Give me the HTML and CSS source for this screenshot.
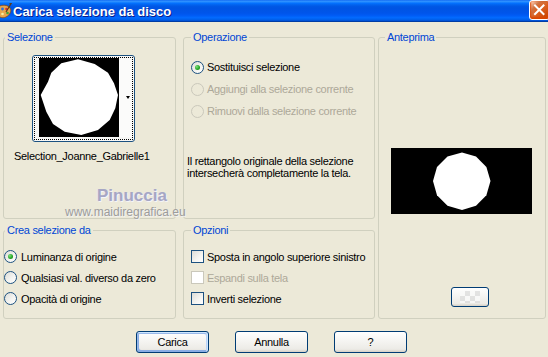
FILE: index.html
```html
<!DOCTYPE html>
<html lang="it">
<head>
<meta charset="utf-8">
<title>Carica selezione da disco</title>
<link rel="stylesheet" href="styles.css">
</head>
<body>
<div class="window">
  <div class="titlebar">
    <div class="title-left">
      <svg class="app-icon" width="12" height="16" viewBox="0 0 12 16">
        <path d="M-2 4 C2 1 8 2 10 5 C12 8 10 12 6 14 C2 16 -2 14 -2 10 Z" fill="#E8A54C" stroke="#8A4B12" stroke-width="0.8"/>
        <circle cx="2.5" cy="6" r="1.4" fill="#2E6FD8"/>
        <circle cx="6.5" cy="6" r="1.3" fill="#D62F2F"/>
        <circle cx="7.5" cy="10" r="1.3" fill="#3BA53B"/>
        <circle cx="2.5" cy="11" r="1.3" fill="#F6F0A0"/>
        <path d="M9.5 1 L11.5 0 L6 9" stroke="#5A3A1A" stroke-width="1.2" fill="none"/>
      </svg>
      <span class="title">Carica selezione da disco</span>
    </div>
    <button class="close" aria-label="Chiudi">
      <svg width="19" height="18" viewBox="0 0 19 18"><path d="M5 4.5 L13.5 13 M13.5 4.5 L5 13" stroke="#fff" stroke-width="2" stroke-linecap="square"/></svg>
    </button>
  </div>

  <div class="content">
    <div class="groups">
      <div class="col col-left">
        <div class="group g-sel">
          <span class="legend legend-left">Selezione</span>
          <div class="thumb">
            <div class="thumb-focus">
              <svg class="thumb-img" width="80" height="79" viewBox="0 0 80 79">
                <rect width="80" height="79" fill="#000"/>
                <polygon fill="#fff" points="22.3,5.3 39,1.3 55.7,6 69,14.7 75,25.3 79,37 76.3,50.3 70.7,62 59,72 42.3,77 25.7,73.7 14,66 7.3,53.7 1.7,37 9,23.7 12.3,14.7"/>
              </svg>
              <div class="thumb-strip"><span class="thumb-arrow"></span></div>
            </div>
          </div>
          <div class="caption">Selection_Joanne_Gabrielle1</div>
        </div>
        <div class="group g-crea">
          <span class="legend legend-left">Crea selezione da</span>
          <div class="opt-list opt-crea">
            <label class="opt"><span class="radio checked"></span>Luminanza di origine</label>
            <label class="opt"><span class="radio"></span>Qualsiasi val. diverso da zero</label>
            <label class="opt"><span class="radio"></span>Opacità di origine</label>
          </div>
        </div>
      </div>

      <div class="col col-mid">
        <div class="group g-op">
          <span class="legend legend-mid">Operazione</span>
          <div class="opt-list opt-op">
            <label class="opt opt-tall"><span class="radio checked"></span>Sostituisci selezione</label>
            <label class="opt opt-tall disabled"><span class="radio off"></span>Aggiungi alla selezione corrente</label>
            <label class="opt opt-tall disabled"><span class="radio off"></span>Rimuovi dalla selezione corrente</label>
          </div>
          <p class="note">Il rettangolo originale della selezione intersecherà completamente la tela.</p>
        </div>
        <div class="group g-opz">
          <span class="legend legend-mid">Opzioni</span>
          <div class="opt-list opt-opz">
            <label class="opt"><span class="check"></span>Sposta in angolo superiore sinistro</label>
            <label class="opt disabled"><span class="check off"></span>Espandi sulla tela</label>
            <label class="opt"><span class="check"></span>Inverti selezione</label>
          </div>
        </div>
      </div>

      <div class="group g-ant">
        <span class="legend legend-ant">Anteprima</span>
        <svg class="preview" width="141" height="66" viewBox="0 0 141 66">
          <rect width="141" height="66" fill="#000"/>
          <polygon fill="#fff" points="99.5,33 95.4,47.3 85,57.8 71,62 56.5,57.8 46,47.3 42,33 46,19 56.5,8.5 71,4.5 85,8.5 95.4,19"/>
        </svg>
        <button class="xpbtn bg-btn" aria-label="Sfondo"><span class="checker"></span></button>
      </div>
    </div>

    <div class="buttons">
      <button class="xpbtn default">Carica</button>
      <button class="xpbtn">Annulla</button>
      <button class="xpbtn">?</button>
    </div>
  </div>

  <div class="watermark">
    <div class="wm-name">Pinuccia</div>
    <div class="wm-url">www.maidiregrafica.eu</div>
  </div>
</div>
</body>
</html>
```

FILE: styles.css
```css
* { box-sizing: border-box; }

html, body {
  margin: 0;
  padding: 0;
}

body {
  background: #ECE9D8;
  font-family: "Liberation Sans", Arial, sans-serif;
  font-size: 11px;
  letter-spacing: -0.3px;
  color: #000;
}

.window {
  position: relative;
  width: 548px;
  height: 357px;
  overflow: hidden;
  background: #ECE9D8;
}

/* ---------- title bar ---------- */
.titlebar {
  height: 22px;
  display: flex;
  align-items: center;
  justify-content: space-between;
  background: linear-gradient(180deg, #0058ee 0%, #3593ff 4%, #288eff 8%, #127dff 12%, #036ffc 16%, #0262ee 22%, #0057e5 30%, #0054e3 38%, #0055eb 60%, #005bf5 70%, #026afe 80%, #0062ef 88%, #0052d6 94%, #0040ab 97%, #003092 100%);
}

.title-left {
  display: flex;
  align-items: center;
}

.app-icon {
  display: block;
  margin-right: 1px;
}

.title {
  color: #fff;
  font-family: "Liberation Sans", Arial, sans-serif;
  font-weight: bold;
  font-size: 13px;
  letter-spacing: 0;
  text-shadow: 1px 1px 0 #0A1E8A;
}

.close {
  align-self: flex-start;
  width: 21px;
  height: 20px;
  margin-right: -2px;
  padding: 0;
  border: 1px solid #fff;
  border-radius: 3px;
  background: radial-gradient(circle at 90% 90%, #cc4600 0%, #dc6527 55%, #cd7546 70%, #ffccb2 90%, #fff 100%);
  box-shadow: inset 0 -1px 2px 1px #da4600;
  display: flex;
  align-items: center;
  justify-content: center;
}

.close svg { display: block; }

/* ---------- content ---------- */
.content {
  padding: 15px 0 0 3px;
}

.groups {
  display: flex;
  align-items: flex-start;
}

.col {
  display: flex;
  flex-direction: column;
  gap: 11px;
}

.col-left { width: 173px; }
.col-mid { width: 192px; margin-left: 7px; }

.group {
  position: relative;
  border: 1px solid #D0D0BF;
  border-radius: 3px;
}

.g-sel, .g-op { height: 182px; }
.g-crea, .g-opz { height: 89px; }

.g-ant {
  width: 168px;
  height: 282px;
  margin-left: 3px;
}

.legend {
  position: absolute;
  top: -7px;
  padding: 0 2px;
  line-height: 13px;
  background: #ECE9D8;
  color: #0046D5;
  white-space: nowrap;
}

.legend-left { left: 1px; }
.legend-mid { left: 7px; }
.legend-ant { left: 6px; }

/* ---------- selection thumbnail ---------- */
.thumb {
  width: 103px;
  height: 87px;
  margin: 17px 0 0 28px;
  padding: 1px;
  border: 1px solid #1C5180;
  border-radius: 3px;
  background: #F7F7F5;
}

.thumb-focus {
  height: 83px;
  border: 1px dotted #000;
  padding: 0 0 0 4px;
  display: flex;
  align-items: flex-start;
}

.thumb-img { display: block; }

.thumb-strip {
  position: relative;
  flex: 1;
  height: 79px;
  background: #FBFBFA;
}

.thumb-arrow {
  position: absolute;
  left: 7px;
  top: 38px;
  width: 0;
  height: 0;
  border-left: 2.5px solid transparent;
  border-right: 2.5px solid transparent;
  border-top: 3px solid #000;
}

.caption {
  margin: 8px 0 0 10px;
  line-height: 13px;
  white-space: nowrap;
}

/* ---------- options ---------- */
.opt-list {
  display: flex;
  flex-direction: column;
}

.opt {
  display: flex;
  align-items: center;
  height: 21px;
  white-space: nowrap;
}

.opt-tall { height: 22px; }

.opt.disabled { color: #ACA899; }

.opt-op { padding: 18px 0 0 7px; }
.opt-crea { padding: 15px 0 0 0; }
.opt-opz { padding: 15px 0 0 7px; }

.radio {
  position: relative;
  flex: none;
  width: 13px;
  height: 13px;
  margin-right: 4px;
  border: 1px solid #1C5180;
  border-radius: 50%;
  background: linear-gradient(135deg, #DCDCD7 0%, #F5F5F2 60%, #FFFFFF 100%);
}

.opt-op .radio { margin-right: 3px; }

.radio.checked::after {
  content: "";
  position: absolute;
  left: 3px;
  top: 3px;
  width: 5px;
  height: 5px;
  border-radius: 50%;
  background: radial-gradient(circle at 35% 35%, #7BE07B 0%, #21A121 60%, #1B8A1B 100%);
}

.radio.off {
  border-color: #CAC8BB;
  background: #ECE9D8;
}

.check {
  flex: none;
  width: 13px;
  height: 13px;
  margin-right: 3px;
  border: 1px solid #1C5180;
  background: linear-gradient(135deg, #DCDCD7 0%, #F5F5F2 60%, #FFFFFF 100%);
}

.check.off {
  border-color: #CAC8BB;
  background: #FFFFFF;
}

.note {
  margin: 33px 0 0 3px;
  line-height: 12px;
}

/* ---------- preview ---------- */
.preview {
  display: block;
  margin: 110px 0 0 12px;
}

/* ---------- buttons ---------- */
.xpbtn {
  font-family: "Liberation Sans", Arial, sans-serif;
  font-size: 11px;
  letter-spacing: -0.3px;
  color: #000;
  padding: 0;
  border: 1px solid #003C74;
  border-radius: 3px;
  background: linear-gradient(180deg, #FFFFFF 0%, #ECEBE6 86%, #D6D0C5 100%);
}

.xpbtn.default {
  box-shadow: inset -1px 1px #CEE7FF, inset 1px 2px #98B8EA, inset -2px 2px #BCD4F6, inset 1px -1px #89ADE4, inset 2px -2px #89ADE4;
}

.bg-btn {
  display: flex;
  align-items: center;
  justify-content: center;
  width: 38px;
  height: 20px;
  margin: 73px 0 0 72px;
}

.checker {
  display: block;
  width: 20px;
  height: 12px;
  background-color: #FAFAFA;
  background-image:
    linear-gradient(45deg, #DEDEDE 25%, transparent 25%, transparent 75%, #DEDEDE 75%),
    linear-gradient(45deg, #DEDEDE 25%, transparent 25%, transparent 75%, #DEDEDE 75%);
  background-size: 10px 10px;
  background-position: 0 0, 5px 5px;
  opacity: 0.8;
}

.buttons {
  display: flex;
  gap: 26px;
  margin: 12px 0 0 133px;
}

.buttons .xpbtn {
  width: 73px;
  height: 22px;
}

/* ---------- watermark ---------- */
.watermark {
  position: absolute;
  left: 65px;
  top: 186px;
  pointer-events: none;
}

.wm-name {
  margin-left: 32px;
  font-size: 17px;
  font-weight: bold;
  line-height: 20px;
  letter-spacing: 0;
  color: #A6A6C4;
  text-shadow: 1px 1px 0 #F4F4F8, -1px 0 0 #E4E4EC;
}

.wm-url {
  font-size: 12px;
  line-height: 13px;
  letter-spacing: 0;
  color: #9C9C9C;
  text-shadow: 1px 1px 0 #F2F2F2;
}
```
